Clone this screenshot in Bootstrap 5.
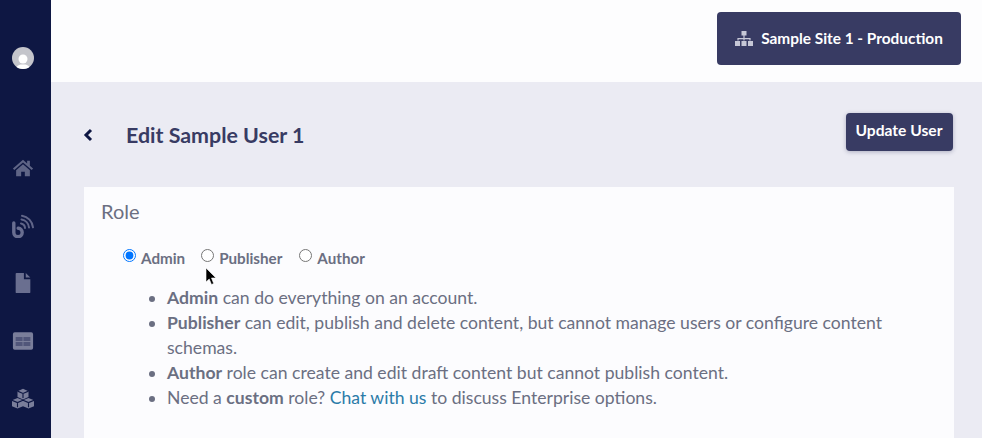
<!DOCTYPE html>
<html lang="en"><head><meta charset="utf-8"><title>Edit Sample User 1</title>
<link href="https://cdn.jsdelivr.net/npm/bootstrap@5.3.0/dist/css/bootstrap.min.css" rel="stylesheet">
<style>
html,body{height:438px;overflow:hidden}
body{font-family:"Lato","Liberation Sans",sans-serif;background:#ebebf3;color:#6b6f82}
.app-shell{height:438px}
.side-rail{width:51px;background:#0e1743;flex:none;padding:47px 5px 0 0;overflow:hidden}
.side-avatar{width:22px;height:22px;border-radius:50%;background:#c4c5cb;overflow:hidden;margin-bottom:87px;flex:none}
.side-icon{width:22px;height:24px;margin-bottom:33.5px;color:#5f6586;flex:none}
.top-strip{height:82px;background:#fdfdfe;padding:12px 21px 0 0}
.site-btn{width:244px;height:53px;background:#383b63;color:#fff;font-weight:700;font-size:15.4px;border-radius:4px;border:0}
.page-area{padding:0 28px 0 33px}
.title-row{height:105px;padding-top:31px}
.back-mark{width:10px;height:14px;color:#0e1743;margin-right:33px;margin-top:-1px;margin-left:-1px}
.page-title{font-size:21.4px;font-weight:700;color:#383b63;margin:0;line-height:44px}
.title-left{height:44px}
.update-btn{width:107px;height:38px;background:#383b63;color:#fff;font-weight:700;font-size:15.6px;border-radius:4px;border:0;box-shadow:0 1px 4px rgba(56,59,99,.35);padding:0 1px 2px 0;margin-right:1px}
.role-panel{background:#fcfcfe;padding:12px 17px 0;height:251px;overflow:hidden}
.role-title{font-size:20px;line-height:24px;font-weight:400;color:#6b6f82;margin-bottom:24px}
.role-options{padding-left:22px;height:22px;gap:16px;margin-bottom:16px}
.role-opt{display:flex;align-items:flex-start;gap:5px;font-size:15.2px;font-weight:700;line-height:22px;margin:0}
.role-opt input{width:13px;height:13px;margin:2px 0 0;accent-color:#0075ff}
.role-opt-last{margin-left:1px}
.role-notes{padding-left:66px;margin:0;font-size:17.6px;line-height:25px;color:#6b6f82}
.role-notes b{font-weight:700}
.role-notes a{color:#2b7ba8;text-decoration:none}
.pointer-mark{position:absolute;left:205px;top:268px;width:12px;height:18px}
</style></head><body>
<div class="app-shell d-flex">
<nav class="side-rail d-flex flex-column align-items-center">
<div class="side-avatar"><svg viewBox="0 0 22 22" width="22" height="22"><circle cx="11" cy="9" r="4.500" fill="#fff"/><path d="M3 22c0-5.500 3.500-7 5.500-7.500h5c2 .5 5.500 2 5.500 7.500z" fill="#fff"/></svg></div>
<svg class="side-icon" viewBox="0 0 24 24"><path fill="currentColor" d="M12 3 1 12.500l1.500 1.600L12 6l9.500 8.100L23 12.500 19.500 9.500V4h-3v3zM4.500 14.500V21h5.500v-5h4v5h5.500v-6.500L12 8z"/></svg>
<svg class="side-icon" viewBox="0 0 22 24" fill="none" stroke="#696e90" stroke-linecap="round"><path stroke-width="3.400" d="M1.800 9v9.500a4.200 4.200 0 0 0 8.400 0c0-2.500-2-4.500-4-4.200"/><path stroke-width="2" d="M9 9.500a5 5 0 0 1 4 4.500M9.500 5.500a9 9 0 0 1 7.500 8M10 1.800a13 13 0 0 1 11 11.500" opacity=".9"/></svg>
<svg class="side-icon" viewBox="0 0 24 24"><path fill="#6a6f90" d="M5 1h8v7h7v14a1 1 0 0 1-1 1H5a1 1 0 0 1-1-1V2a1 1 0 0 1 1-1zm10 0 5 5h-5z"/></svg>
<svg class="side-icon" viewBox="0 0 24 24"><path fill="#7a7e9a" d="M3 2.500h18a2 2 0 0 1 2 2v15a2 2 0 0 1-2 2H3a2 2 0 0 1-2-2v-15a2 2 0 0 1 2-2z"/><path fill="#51567a" d="M4 7.500h7.500V12H4zM12.500 7.500H20V12h-7.500zM4 13h7.500v4.500H4zM12.500 13H20v4.500h-7.500z"/></svg>
<svg class="side-icon" viewBox="0 0 24 24"><path fill="#7a7e9a" d="M12 2l6 2.500V11l-6 2.500L6 11V4.500zM6 12l6 2.500V21l-6 2.500L0 21v-6.500zM18 12l6 2.500V21l-6 2.500L12 21v-6.500z"/><path stroke="#0e1743" stroke-width="1.200" fill="none" d="M6 4.500l6 2.500 6-2.500M12 7v5M0 14.500l6 2.500 6-2.500M6 17v5M12 14.500l6 2.500 6-2.500M18 17v5"/></svg>
</nav>
<main class="flex-grow-1">
<header class="top-strip d-flex justify-content-end align-items-start">
<button class="site-btn btn d-flex align-items-center justify-content-center gap-2" type="button"><svg width="18" height="15" viewBox="0 0 18 15"><path fill="#c6c7d6" d="M6.500 0h5v4.500h-5zM8.400 4.500h1.200V7h6v2.500h-1.200V8.200H9.600v1.300H8.400V8.200H3.600v1.300H2.400V7h6zM0 10h5v5H0zm6.500 0h5v5h-5zm6.500 0h5v5h-5z"/></svg><span>Sample Site 1 - Production</span></button>
</header>
<div class="page-area">
<div class="title-row d-flex justify-content-between align-items-start">
<div class="title-left d-flex align-items-center"><svg class="back-mark" viewBox="0 0 10 14"><path fill="none" stroke="currentColor" stroke-width="3" d="M8 2 3 7l5 5"/></svg><h1 class="page-title">Edit Sample User 1</h1></div>
<button class="update-btn btn" type="button">Update User</button>
</div>
<section class="role-panel">
<div class="role-title">Role</div>
<div class="role-options d-flex">
<label class="role-opt"><input type="radio" name="role" checked>Admin</label>
<label class="role-opt"><input type="radio" name="role">Publisher</label>
<label class="role-opt role-opt-last"><input type="radio" name="role">Author</label>
</div>
<ul class="role-notes">
<li><b>Admin</b> can do everything on an account.</li>
<li><b>Publisher</b> can edit, publish and delete content, but cannot manage users or configure content schemas.</li>
<li><b>Author</b> role can create and edit draft content but cannot publish content.</li>
<li>Need a <b>custom</b> role? <a href="#">Chat with us</a> to discuss Enterprise options.</li>
</ul>
</section>
</div>
</main>
</div>
<svg class="pointer-mark" viewBox="0 0 12 18"><path d="M1 0v14l3.200-3 2.300 5.500 2.200-1L6.500 10H11z" fill="#000" stroke="#fff" stroke-width=".6"/></svg>
<script src="https://cdn.jsdelivr.net/npm/bootstrap@5.3.0/dist/js/bootstrap.bundle.min.js"></script>
</body></html>
